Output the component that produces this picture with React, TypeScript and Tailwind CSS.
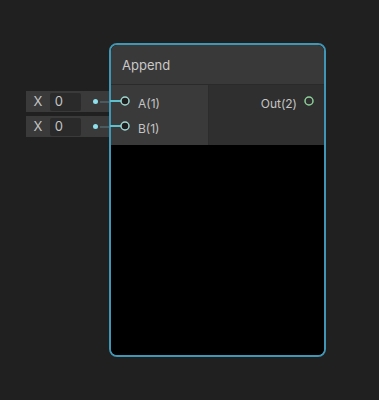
import React from "react";

function Port({ color, fill }: { color: string; fill: string }) {
  return (
    <svg width="10" height="10" viewBox="0 0 10 10">
      <circle cx="5" cy="5" r="4" fill={fill} stroke={color} strokeWidth="1.5" />
    </svg>
  );
}

function InputField({ top }: { top: number }) {
  return (
    <div
      className="absolute left-[26px] w-[84px] h-[21px] bg-[#3a3a3a] flex items-center"
      style={{ top }}
    >
      <span className="w-[24px] text-center text-[13px] text-[#c4c4c4] leading-none">X</span>
      <div className="w-[32px] h-[18px] bg-[#2a2a2a] rounded-[2px] flex items-center pl-[5px] text-[13px] text-[#c4c4c4] leading-none">
        0
      </div>
      <div className="ml-[12px] w-[5px] h-[5px] rounded-full bg-[#8ee0ec]" />
      <div className="ml-[2px] w-[10px] h-[2px] bg-[#4a5a5e]" />
    </div>
  );
}

export default function App() {
  return (
    <div
      className="relative w-[379px] h-[400px] bg-[#202020] overflow-hidden"
      style={{ fontFamily: "Inter, 'Noto Sans', sans-serif" }}
    >
      <InputField top={91} />
      <InputField top={116} />

      <div className="absolute left-[109px] top-[43px] w-[217px] h-[314px] rounded-[8px] border-2 border-[#4096b5] bg-black overflow-hidden flex flex-col">
        <div className="h-[40px] bg-[#393939] border-b border-[#2a2a2a] flex items-center pl-[11px] pt-[2px] text-[13px] text-[#c8c8c8] shrink-0">
          Append
        </div>
        <div className="h-[60px] flex shrink-0">
          <div className="w-[98px] bg-[#3a3a3a] border-r border-[#2c2c2c] flex flex-col pt-[6px]">
            <div className="h-[25px] flex items-center pl-[27px] text-[12px] text-[#c4c4c4]">A(1)</div>
            <div className="h-[25px] flex items-center pl-[27px] text-[12px] text-[#c4c4c4]">B(1)</div>
          </div>
          <div className="flex-1 bg-[#2f2f2f] flex flex-col pt-[6px]">
            <div className="h-[25px] flex items-center justify-end pr-[27px] text-[12px] text-[#c4c4c4]">Out(2)</div>
          </div>
        </div>
        <div className="flex-1 bg-black" />
      </div>

      {/* wires */}
      <div className="absolute left-[110px] top-[100px] w-[12px] h-[2px] bg-[#5cc0cf]" />
      <div className="absolute left-[110px] top-[125px] w-[12px] h-[2px] bg-[#5cc0cf]" />

      {/* ports */}
      <div className="absolute left-[120px] top-[96px]">
        <Port color="#9fd6d0" fill="#1e1e1e" />
      </div>
      <div className="absolute left-[120px] top-[121px]">
        <Port color="#9fd6d0" fill="#1e1e1e" />
      </div>
      <div className="absolute left-[304px] top-[96px]">
        <Port color="#8fd09a" fill="#2f2f2f" />
      </div>
    </div>
  );
}
